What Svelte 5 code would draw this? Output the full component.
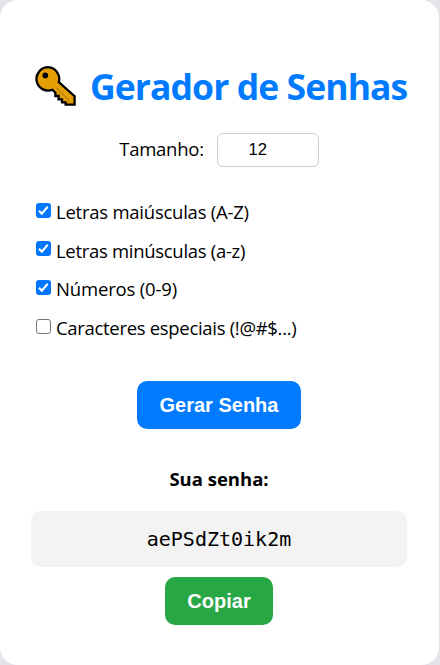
<script>
  let length = $state(12);
  let password = $state('aePSdZt0ik2m');
  let options = $state([
    { label: 'Letras maiúsculas (A-Z)', chars: 'ABCDEFGHIJKLMNOPQRSTUVWXYZ', on: true, cls: 'upper' },
    { label: 'Letras minúsculas (a-z)', chars: 'abcdefghijklmnopqrstuvwxyz', on: true, cls: 'lower' },
    { label: 'Números (0-9)', chars: '0123456789', on: true, cls: 'digits' },
    { label: 'Caracteres especiais (!@#$...)', chars: '!@#$%&*()-_=+?', on: false, cls: 'special' }
  ]);

  function generate() {
    const pool = options.filter((o) => o.on).map((o) => o.chars).join('');
    if (!pool) return;
    password = Array.from({ length }, () => pool[Math.floor(Math.random() * pool.length)]).join('');
  }

  function copy() {
    navigator.clipboard?.writeText(password);
  }
</script>

<main class="card">
  <h1>
    <svg class="key" width="42" height="42" viewBox="0 0 42 42" aria-hidden="true">
      <path d="M13.2 2.2a11.7 11.7 0 1 0 4.2 22.6l3 3v3.2h3.2v3.3h3.4v3h3.6v2.4h9v-8.5L23.8 17a11.7 11.7 0 0 0-10.6-14.8z" fill="#e59f05" stroke="#000" stroke-width="2.3" />
      <path d="M20.5 22 34.5 36" stroke="#b98512" stroke-width="1.3" />
      <circle cx="10.3" cy="10.4" r="2.8" />
    </svg>
    <span>Gerador de Senhas</span>
  </h1>

  <div class="size">
    <label for="len">Tamanho:</label>
    <input id="len" type="number" min="4" max="50" bind:value={length} />
  </div>

  <div class="options">
    {#each options as o}
      <label class="option">
        <input type="checkbox" bind:checked={o.on} />
        <span class="box" class:on={o.on}>
          {#if o.on}
            <svg width="15" height="15" viewBox="0 0 15 15"><path d="M3 7.8 5.8 10.6 11.7 3.8" fill="none" stroke="#fff" stroke-width="2.1" /></svg>
          {/if}
        </span>
        <span class="text {o.cls}">{o.label}</span>
      </label>
    {/each}
  </div>

  <button class="generate" onclick={generate}>Gerar Senha</button>
  <h3>Sua senha:</h3>
  <div class="password">{password}</div>
  <button class="copy" onclick={copy}>Copiar</button>
</main>

<style>
  :global(body) {
    background: #e3e4e8;
    overflow: hidden;
  }
  .card {
    box-sizing: border-box;
    width: 439px;
    height: 665px;
    padding: 59px 32px 0 31px;
    display: flex;
    flex-direction: column;
    align-items: center;
    background: #fff;
    border-radius: 18px;
    font-family: 'Open Sans', 'Noto Sans', sans-serif;
    font-size: 18.5px;
    color: #000;
    white-space: nowrap;
  }
  h1 {
    display: flex;
    align-self: stretch;
    align-items: center;
    gap: 13px;
    height: 54px;
    margin: 0;
    padding-left: 4px;
    font-size: 35.5px;
    line-height: 54px;
    color: #007bff;
    letter-spacing: -0.92px;
  }
  .key {
    flex: none;
  }
  .size {
    display: flex;
    align-items: center;
    gap: 13px;
    height: 34px;
    margin-top: 20px;
  }
  .size label {
    padding-bottom: 3px;
    letter-spacing: -0.25px;
  }
  .size input {
    box-sizing: border-box;
    width: 102px;
    height: 34px;
    padding: 0 17px 2px 0;
    border: 1px solid #ccc;
    border-radius: 6px;
    background: #fff;
    text-align: center;
    text-indent: 12px;
    font: 16.5px 'Liberation Sans', Arial, sans-serif;
    color: #000;
    outline: none;
    appearance: textfield;
  }
  .options {
    align-self: stretch;
    margin-top: 25px;
    padding-left: 5px;
  }
  .option {
    display: flex;
    align-items: center;
    gap: 5px;
    height: 38.6px;
    line-height: 38.6px;
  }
  .option input {
    position: absolute;
    opacity: 0;
    pointer-events: none;
  }
  .text {
    padding-top: 2px;
  }
  .upper {
    letter-spacing: -0.24px;
  }
  .lower {
    letter-spacing: -0.3px;
  }
  .digits {
    letter-spacing: -0.16px;
  }
  .special {
    letter-spacing: -0.31px;
  }
  .box {
    box-sizing: border-box;
    width: 15px;
    height: 15px;
    margin-bottom: 2px;
    border: 1px solid #767676;
    border-radius: 3px;
  }
  .box.on {
    border: 0;
    background: #0075ff;
  }
  .box svg {
    display: block;
  }
  button {
    height: 48px;
    padding: 0;
    border: 0;
    border-radius: 10px;
    color: #fff;
    font: bold 20px 'Liberation Sans', Arial, sans-serif;
  }
  .generate {
    width: 164px;
    margin-top: 35px;
    background: #007bff;
  }
  h3 {
    margin: 36px 0 0;
    height: 28px;
    font-size: 18.5px;
    line-height: 28px;
  }
  .password {
    align-self: stretch;
    height: 56px;
    margin-top: 18px;
    border-radius: 10px;
    background: #f3f3f3;
    font: 20px/56px 'DejaVu Sans Mono', monospace;
    text-align: center;
  }
  .copy {
    width: 108px;
    margin-top: 10px;
    background: #28a745;
  }
</style>
